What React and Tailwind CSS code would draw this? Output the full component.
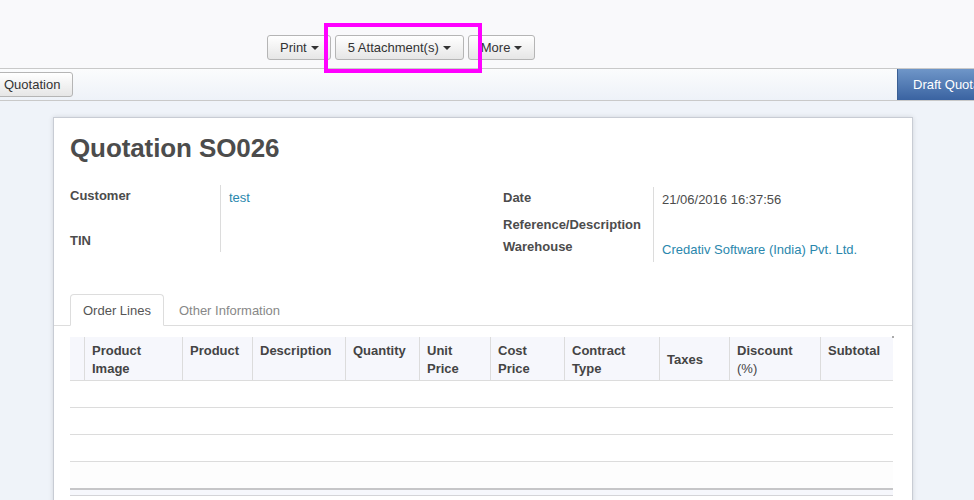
import React from "react";

function Caret() {
  return (
    <span className="inline-block ml-[4px] w-0 h-0 border-x-[4px] border-t-[4px] border-x-transparent border-t-[#333] align-middle" />
  );
}

function Btn({ children, caret = true, className = "" }) {
  return (
    <div
      className={
        "h-[25px] flex items-center px-[12px] border border-[#b5b5b5] rounded-[3px] bg-linear-to-b from-[#ffffff] to-[#e6e6e6] text-[#333] text-[13px] leading-[18px] whitespace-nowrap shrink-0 " +
        className
      }
    >
      {children}
      {caret && <Caret />}
    </div>
  );
}

const cols = [
  { t: ["", ""] },
  { t: ["Product", "Image"] },
  { t: ["Product"] },
  { t: ["Description"] },
  { t: ["Quantity"] },
  { t: ["Unit", "Price"] },
  { t: ["Cost", "Price"] },
  { t: ["Contract", "Type"] },
  { t: ["Taxes"], center: true },
  { t: ["Discount", "(%)"], lightSecond: true },
  { t: ["Subtotal"] },
];

export default function App() {
  return (
    <div className="relative w-[974px] h-[500px] overflow-hidden flex flex-col font-['Liberation_Sans',Arial,sans-serif] text-[13px] leading-[18px] text-[#4c4c4c]">
      {/* Control panel */}
      <div className="h-[68px] shrink-0 bg-[#f9f9fb] flex items-start pl-[267px] pt-[35px] gap-[4px]">
        <Btn className="pr-[11px]">Print</Btn>
        <Btn>5 Attachment(s)</Btn>
        <Btn>More</Btn>
      </div>

      {/* Status bar */}
      <div className="h-[33px] shrink-0 flex border-y border-[#c9c9c9] bg-linear-to-b from-[#fbfcfd] to-[#eef2f8]">
        <div className="w-[897px] shrink-0 flex items-start">
          <Btn caret={false} className="-ml-[9px] mt-[3px]">
            Quotation
          </Btn>
        </div>
        <div className="shrink-0 flex items-center pl-[15px] pr-[20px] border-l border-[#3a5f94] bg-linear-to-b from-[#6f96c8] to-[#3a63a1] text-white whitespace-nowrap">
          Draft Quotation
        </div>
      </div>

      {/* Body */}
      <div className="flex-1 bg-[#eff3f9] pt-[16px] pl-[53px] overflow-hidden">
        <div className="w-[860px] min-h-[420px] bg-white border border-[#c8ccd4] shadow-[0_0_5px_rgba(0,0,0,0.12)] pl-[16px] pr-[19px] pt-[15px]">
          <h1 className="text-[26px] leading-[30px] font-bold text-[#4c4c4c] tracking-[-0.1px]">
            Quotation SO026
          </h1>

          {/* Groups */}
          <div className="flex items-start mt-[22px]">
            <div className="w-[433px] shrink-0">
              <div className="flex h-[45px]">
                <div className="w-[150px] pt-[2px] font-bold">Customer</div>
                <div className="flex-1 border-l border-[#dcdcdc] pl-[8px] pt-[4px] text-[#2a87ad]">
                  test
                </div>
              </div>
              <div className="flex h-[22px]">
                <div className="w-[150px] pt-[2px] font-bold">TIN</div>
                <div className="flex-1 border-l border-[#dcdcdc]" />
              </div>
            </div>
            <div className="w-[390px] shrink-0 mt-[2px]">
              <div className="flex h-[27px]">
                <div className="w-[150px] pt-[2px] font-bold">Date</div>
                <div className="flex-1 border-l border-[#dcdcdc] pl-[8px] pt-[4px]">
                  21/06/2016 16:37:56
                </div>
              </div>
              <div className="flex h-[22px]">
                <div className="w-[150px] pt-[2px] font-bold whitespace-nowrap">
                  Reference/Description
                </div>
                <div className="flex-1 border-l border-[#dcdcdc]" />
              </div>
              <div className="flex h-[26px]">
                <div className="w-[150px] pt-[2px] font-bold">Warehouse</div>
                <div className="flex-1 border-l border-[#dcdcdc] pl-[8px] pt-[5px] text-[#2a87ad] whitespace-nowrap">
                  Credativ Software (India) Pvt. Ltd.
                </div>
              </div>
            </div>
          </div>

          {/* Tabs */}
          <div className="mt-[32px] -ml-[16px] -mr-[19px] pl-[16px] flex border-b border-[#dddddd]">
            <div className="h-[32px] -mb-px px-[12px] pt-[7px] border border-[#dddddd] border-b-white bg-white rounded-t-[4px] text-[#555]">
              Order Lines
            </div>
            <div className="h-[32px] -mb-px ml-[2px] px-[12px] pt-[7px] border border-transparent text-[#888]">
              Other Information
            </div>
          </div>

          {/* Table */}
          <div className="relative mt-[11px]">
            <div className="absolute -top-[1px] -right-[1px] w-[2px] h-[2px] bg-[#aaaaaa]" />
            <div className="grid grid-cols-[14px_98px_70px_93px_74px_71px_74px_95px_70px_91px_73px] h-[44px] bg-[#f6f7fc] border-b border-[#dcdcdc]">
              {cols.map((c, i) => (
                <div
                  key={i}
                  className={
                    (i > 0 ? "border-l border-[#dcdcdc] pl-[7px] " : "") +
                    (c.center ? "flex items-center pt-[2px] " : "pt-[5px] ") +
                    "font-bold text-[#444] whitespace-nowrap"
                  }
                >
                  {c.t.map((line, j) => (
                    <div
                      key={j}
                      className={c.lightSecond && j === 1 ? "font-normal" : ""}
                    >
                      {line}
                    </div>
                  ))}
                </div>
              ))}
            </div>
            <div className="h-[27px] border-b border-[#dcdcdc] bg-white" />
            <div className="h-[27px] border-b border-[#dcdcdc] bg-white" />
            <div className="h-[27px] border-b border-[#dcdcdc] bg-white" />
            <div className="h-[26px] bg-[#fdfdfd]" />
            <div className="h-[8px] border-t-2 border-b border-t-[#c6c6c8] border-b-[#d4d4d8] bg-[#f6f7fc]" />
          </div>
        </div>
      </div>

      {/* Highlight overlay */}
      <div className="absolute left-[324px] top-[23px] w-[158px] h-[50px] border-4 border-[#ff00ff] pointer-events-none" />
    </div>
  );
}
